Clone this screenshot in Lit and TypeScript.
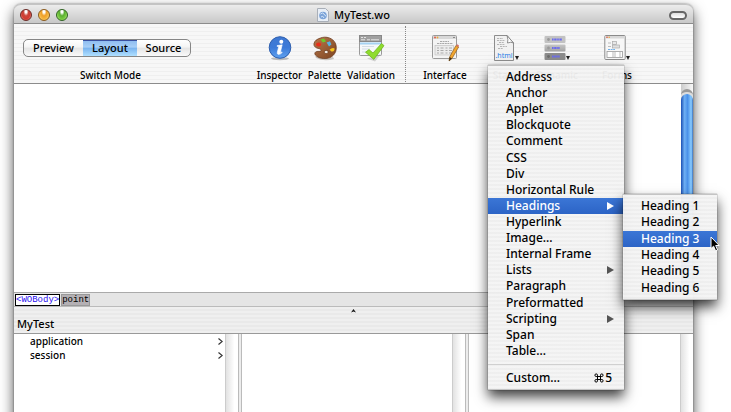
import { LitElement, html, css, svg, nothing } from "lit";
import { customElement, property, state } from "lit/decorators.js";
import { classMap } from "lit/directives/class-map.js";

const inspectorIcon = svg`<svg viewBox="0 0 24 26" width="24" height="26">
  <defs><linearGradient id="ins" x1="0" y1="0" x2="0" y2="1"><stop offset="0" stop-color="#3f78d2"/><stop offset=".5" stop-color="#3c7ad8"/><stop offset="1" stop-color="#5fa2f0"/></linearGradient></defs>
  <ellipse cx="12" cy="23.6" rx="9" ry="1.6" fill="#bbb"/>
  <circle cx="12" cy="12.5" r="10.8" fill="url(#ins)" stroke="#2f5fae" stroke-width="1"/>
  <circle cx="13.3" cy="6.8" r="2" fill="#fff"/>
  <path d="M9.2 10.6 L14.2 9.8 L12.4 17.2 Q12.3 18 13.9 16.9 L14.2 17.6 Q12.3 19.6 10.3 19.4 Q8.8 19 9.3 17.2 L10.6 12 Q10.6 11.2 9.1 11.4Z" fill="#fff" stroke="#fff" stroke-width=".6"/>
</svg>`;

const paletteIcon = svg`<svg viewBox="0 0 26 26" width="26" height="26">
  <defs><linearGradient id="pal" x1="0" y1="0" x2="1" y2="1"><stop offset="0" stop-color="#b87a4c"/><stop offset="1" stop-color="#7c4220"/></linearGradient></defs>
  <path d="M3 21 Q12 26 21 22 L22 24 Q12 27 4 23Z" fill="#c8c4c0"/>
  <path d="M8.5 3 C14 .8 21 3 23.5 8.5 C25.5 14 23.5 20 18 22.6 C13 24.6 6 23.4 3.4 20 C1.8 17.4 4 16.2 7 16.4 C9.6 16.4 10 14.8 7.6 13.8 C4 13 1.6 11.8 2 8.6 C2.6 5.6 5 4.2 8.5 3Z" fill="url(#pal)" stroke="#6b3a1d" stroke-width=".8"/>
  <ellipse cx="14.2" cy="17" rx="2" ry="1.6" fill="#f4efe9" stroke="#5d2d12" stroke-width=".6"/>
  <ellipse cx="6.6" cy="9.6" rx="2.6" ry="2" fill="#e8301c"/>
  <path d="M8.6 4.6 L12 3.6 L14 6.4 L10.8 7.4Z" fill="#6cc92c"/>
  <path d="M14.6 7.6 L18 6.2 L19.4 9.6 L17 11.6Z" fill="#55b4e4"/>
  <path d="M17.6 14.8 Q20 12.4 22.6 13.4 Q22.6 16.6 19.4 16.6Z" fill="#f7c81e"/>
</svg>`;

const validationIcon = svg`<svg viewBox="0 0 28 28" width="28" height="28">
  <rect x="2.5" y="1.500" width="22" height="20" rx="1" fill="#f6f8fa" stroke="#9a9a9a"/>
  <rect x="2.500" y="1.500" width="22" height="6" fill="#a0a0a0" stroke="#888"/>
  <path d="M4 3.500h2M7 3.500h2M4 5.800h4M10 5.800h3M14 5.800h8" stroke="#e4e4e4" stroke-width="1"/>
  <path d="M3 9.500h21" stroke="#a5d2f2" stroke-width="2"/>
  <path d="M5 12.500h12M5 15h8M5 18h5" stroke="#d3dde6" stroke-width="1"/>
  <path d="M10 24.500 L18 27.500 L24 20Z" fill="#999" opacity=".4"/>
  <path d="M8.500 18.200 L12 15.600 L16 19 L24.500 9.500 L27 11.600 L16.800 25.400Z" fill="#8fdc2e" stroke="#6fb51f" stroke-width=".8"/>
</svg>`;

const interfaceIcon = svg`<svg viewBox="0 0 28 28" width="28" height="28">
  <rect x="1.500" y="1.500" width="24" height="23" rx="1" fill="#f4f4f4" stroke="#9a9a9a"/>
  <rect x="2" y="2" width="23" height="3" fill="#d8d8d8"/>
  <circle cx="4" cy="3.500" r=".9" fill="#e0533c"/><circle cx="6.500" cy="3.500" r=".9" fill="#e8a83c"/><path d="M22 3.500h2" stroke="#888"/>
  <path d="M9 7.500h9M6 9.500h16" stroke="#a9a9a9" stroke-dasharray="2 .6"/>
  <rect x="4" y="11.500" width="18.500" height="9.500" fill="#ececec" stroke="#bbb" stroke-width=".6"/>
  <path d="M6 14h15M6 16.500h15M6 19h15" stroke="#aaa" stroke-dasharray="2 1.500 3 2"/>
  <path d="M18.600 23 L25 11.400 L27.600 13 L21 24.500 L18 27Z" fill="#f3a62e" stroke="#8a5c1c" stroke-width=".7"/>
  <path d="M25 11.400 L27.600 13 L28 11.400 L26.400 10.200Z" fill="#d9726a"/>
  <path d="M18.600 23 L21 24.500 L18 27Z" fill="#3d2c18"/>
</svg>`;

const staticIcon = svg`<svg viewBox="0 0 22 28" width="22" height="28">
  <path d="M1.500 1.500 H14 L20.500 9 V26.500 H1.500Z" fill="#f1f1f1" stroke="#8d8d8d"/>
  <path d="M14 1.500 Q15.500 6 14.500 9 Q18 7.500 20.500 9Z" fill="#fff" stroke="#777" stroke-width=".8"/>
  <path d="M4 4.500h6M4 6.500h8M6 8.500h5M4 10.500h8M7 12.500h7M5 14.500h5" stroke="#b5b5b5" stroke-dasharray="2 .7"/>
  <text x="11" y="24" text-anchor="middle" font-family="Noto Sans, sans-serif" font-size="7" fill="#2a80e8">.html</text>
</svg>`;

const dynamicIcon = svg`<svg viewBox="0 0 22 28" width="22" height="28">
  <defs><linearGradient id="bar" x1="0" y1="0" x2="0" y2="1"><stop offset="0" stop-color="#c6c6c6"/><stop offset="1" stop-color="#a2a2a2"/></linearGradient></defs>
  <rect x=".5" y="2" width="21" height="7" rx="1" fill="#c2c2c2"/>
  <rect x=".5" y="10.500" width="21" height="7" rx="1" fill="url(#bar)"/>
  <rect x=".5" y="19" width="21" height="7" rx="1" fill="#8c8c8c"/>
  <g fill="#999"><circle cx="4.500" cy="5.500" r="1.400"/><circle cx="4.500" cy="14" r="1.400"/><circle cx="4.500" cy="22.500" r="1.400" fill="#6c6c6c"/></g>
  <path d="M8 5.500h10M8 14h8M8 22.500h8" stroke="#6a6af0" stroke-width="2" stroke-dasharray="1.600 .6 2.400 .6"/>
</svg>`;

const formsIcon = svg`<svg viewBox="0 0 22 28" width="22" height="28">
  <rect x=".8" y="1.500" width="20.400" height="24" rx="1" fill="#f7f7f7" stroke="#8a8a8a"/>
  <rect x="1.300" y="2" width="19.400" height="2.500" fill="#d8d8d8"/>
  <circle cx="3" cy="3.300" r=".8" fill="#e0533c"/><circle cx="5.200" cy="3.300" r=".8" fill="#e8a83c"/>
  <rect x="8.500" y="7.500" width="4" height="3" fill="#e8e8e8" stroke="#aaa" stroke-width=".7"/>
  <path d="M4 9h3M4 12.500h3" stroke="#bbb"/>
  <rect x="8.500" y="11" width="7" height="3" fill="#e0e0e0" stroke="#aaa" stroke-width=".7"/>
  <path d="M4 15.500h7" stroke="#6fb0ec" stroke-dasharray="2 .6"/>
  <rect x="3" y="17.500" width="15.500" height="6" fill="#fff" stroke="#999" stroke-width=".8"/>
  <path d="M9 17.500v6M11 17.500v6M16 17.500v6" stroke="#aaa" stroke-width=".8"/>
</svg>`;

interface Tool {
  label: string;
  icon: unknown;
  menu?: boolean;
}

const tools: Tool[] = [
  { label: "Inspector", icon: inspectorIcon },
  { label: "Palette", icon: paletteIcon },
  { label: "Validation", icon: validationIcon },
];

const insertTools: Tool[] = [
  { label: "Interface", icon: interfaceIcon },
  { label: "Static", icon: staticIcon, menu: true },
  { label: "Dynamic", icon: dynamicIcon, menu: true },
  { label: "Forms", icon: formsIcon, menu: true },
];

interface MenuItem {
  label: string;
  sub?: boolean;
}

const staticItems: MenuItem[] = [
  { label: "Address" },
  { label: "Anchor" },
  { label: "Applet" },
  { label: "Blockquote" },
  { label: "Comment" },
  { label: "CSS" },
  { label: "Div" },
  { label: "Horizontal Rule" },
  { label: "Headings", sub: true },
  { label: "Hyperlink" },
  { label: "Image..." },
  { label: "Internal Frame" },
  { label: "Lists", sub: true },
  { label: "Paragraph" },
  { label: "Preformatted" },
  { label: "Scripting", sub: true },
  { label: "Span" },
  { label: "Table..." },
];

const headingItems: MenuItem[] = [1, 2, 3, 4, 5, 6].map((n) => ({ label: `Heading ${n}` }));

@customElement("menu-row")
class MenuRow extends LitElement {
  @property() label = "";
  @property() shortcut = "";
  @property({ type: Boolean }) sub = false;
  @property({ type: Boolean }) selected = false;

  static styles = css`
    :host {
      display: grid;
      min-height: 16px;
    }
    .row {
      display: flex;
      align-items: center;
      width: 100%;
      border: 0;
      padding: 0 10px 0 18px;
      background: none;
      color: #000;
      font: 500 12px/16px "Noto Sans", sans-serif;
      text-align: left;
      white-space: nowrap;
    }
    .selected {
      background: linear-gradient(#3b76d6, #2c64c6);
      color: #fff;
    }
    .label {
      flex: 1;
    }
    .arrow {
      fill: #555;
    }
    .selected .arrow {
      fill: #fff;
    }
    .shortcut {
      display: flex;
      align-items: center;
      gap: 1px;
      margin-right: 2px;
    }
  `;

  render() {
    return html`<button role="menuitem" class=${classMap({ row: true, selected: this.selected })}>
      <span class="label">${this.label}</span>
      ${this.shortcut
        ? html`<span class="shortcut">
            <svg width="10" height="10" viewBox="0 0 10 10" role="img" aria-label="Command">
              <path d="M3.500 3.500V2.200A1.300 1.300 0 1 0 2.200 3.500H7.800A1.300 1.300 0 1 0 6.500 2.200V7.800A1.300 1.300 0 1 0 7.800 6.500H2.200A1.300 1.300 0 1 0 3.500 7.800Z" fill="none" stroke="#000" stroke-width="1"/>
            </svg>${this.shortcut}</span>`
        : nothing}
      ${this.sub
        ? html`<svg class="arrow" width="7" height="8" viewBox="0 0 7 8"><path d="M0 0L7 4L0 8Z" /></svg>`
        : nothing}
    </button>`;
  }
}

@customElement("app-root")
class AppRoot extends LitElement {
  @state() private mode = "Layout";

  static styles = css`
    :host {
      display: block;
      box-sizing: border-box;
      height: 100vh;
      overflow: hidden;
      position: relative;
      padding: 4px 38px 0 14px;
      background: #fff;
      color: #000;
      font: 500 11px/14px "Noto Sans", sans-serif;
    }
    .window {
      display: flex;
      flex-direction: column;
      box-sizing: border-box;
      height: 110vh;
      border-radius: 7px 7px 0 0;
      box-shadow: 0 6px 14px rgba(0, 0, 0, 0.7), 0 0 2px rgba(0, 0, 0, 0.5);
      background: #ececec;
    }
    .titlebar {
      display: grid;
      grid-template-columns: 1fr auto 1fr;
      align-items: center;
      flex: none;
      box-sizing: border-box;
      height: 20px;
      padding: 2px 6px 0 6px;
      border-top: 1px solid #c4c4c4;
      border-bottom: 1px solid #8c8c8c;
      border-radius: 7px 7px 0 0;
      background: linear-gradient(#ececec, #c8c8c8);
    }
    .lights {
      display: flex;
      gap: 6px;
    }
    .light {
      width: 12px;
      height: 12px;
      padding: 0;
      border: 1px solid #555;
      border-radius: 50%;
    }
    .close {
      border-color: #6b2a26;
      background: radial-gradient(ellipse at 50% 15%, #fff 0 12%, #c9483c 36%, #d23a30 60%, #f6a59a);
    }
    .minimise {
      border-color: #8a5a1c;
      background: radial-gradient(ellipse at 50% 15%, #fff 0 12%, #ef9f28 36%, #f6b23c 60%, #ffee90);
    }
    .zoom {
      border-color: #2e6220;
      background: radial-gradient(ellipse at 50% 15%, #fff 0 12%, #5cae34 36%, #74c83e 60%, #d2f59a);
    }
    .title {
      display: flex;
      align-items: center;
      gap: 5px;
      margin: 0;
      font: 500 11px/16px "Noto Sans", sans-serif;
    }
    .pill {
      justify-self: end;
      width: 18px;
      height: 9px;
      padding: 0;
      border: 2px solid #666;
      border-radius: 5px;
      background: linear-gradient(#ddd, #fff);
    }
    .toolbar {
      display: grid;
      grid-template-columns: 168px 60px 57px 33px 60px 8px 72px 50px 52px 68px;
      flex: none;
      box-sizing: border-box;
      height: 60px;
      padding-left: 9px;
      border-bottom: 1px solid #8c8c8c;
      background: repeating-linear-gradient(#f7f7f7 0 3px, #efefef 3px 4px);
    }
    .switch {
      grid-column: 1 / 3;
      width: 175px;
    }
    .segments {
      display: grid;
      grid-template-columns: 59px 54px 1fr;
      box-sizing: border-box;
      width: 168px;
      height: 18px;
      margin-top: 15px;
      border: 1px solid #868686;
      border-radius: 5px;
      overflow: hidden;
      background: linear-gradient(#fff, #f4f4f4 45%, #e4e4e4 50%, #fafafa);
    }
    .segment {
      padding: 0;
      border: 0;
      background: none;
      color: #000;
      font: 500 11px/16px "Noto Sans", sans-serif;
    }
    .chosen {
      background: linear-gradient(#3a50a0 0 1px, #8fbdf0 1px, #a9d0f8 45%, #79b3ef 50%, #b0e0ff);
    }
    .caption {
      display: block;
      text-align: center;
      white-space: nowrap;
      font: 500 10px/14px "Noto Sans", sans-serif;
    }
    .switch .caption {
      margin-top: 11px;
    }
    .tool {
      display: flex;
      flex-direction: column;
      align-items: center;
      padding: 8px 0 0;
      border: 0;
      background: none;
      color: #000;
    }
    .picture {
      display: flex;
      align-items: center;
      height: 32px;
      margin-bottom: 4px;
    }
    .drop {
      align-self: flex-end;
      margin-bottom: 4px;
    }
    .divider {
      justify-self: center;
      height: 56px;
      margin-top: 2px;
      border-left: 1px dotted #888;
    }
    .editor {
      display: flex;
      justify-content: flex-end;
      flex: none;
      height: 208px;
      background: #fff;
    }
    .scroller {
      display: flex;
      flex-direction: column;
      width: 12px;
      background: linear-gradient(90deg, #ccc, #f8f8f8);
    }
    .cap {
      box-sizing: border-box;
      height: 8px;
      margin-top: 5px;
      border-top: 3px solid #999;
      border-radius: 6px 6px 0 0;
      background: #ddd;
    }
    .thumb {
      flex: 1;
      margin-top: -3px;
      border-radius: 6px 6px 0 0;
      background: linear-gradient(90deg, #1c50b4, #6fb0f4 30%, #4a90e8 55%, #8accff 85%, #3870c0);
    }
    .path {
      display: flex;
      align-items: center;
      gap: 1px;
      flex: none;
      box-sizing: border-box;
      height: 15px;
      padding-left: 1px;
      border-top: 1px solid #aaa;
      border-bottom: 1px solid #bbb;
      background: #e5e5e5;
    }
    .crumb {
      box-sizing: border-box;
      height: 12px;
      padding: 0;
      border: 1px solid #999;
      background: #b4b0b4;
      color: #000;
      font: 9px/10px "Liberation Mono", monospace;
    }
    .current {
      border-color: #000;
      background: #fff;
      color: #2a10f0;
    }
    .header {
      display: grid;
      grid-template-columns: 1fr auto 1fr;
      flex: none;
      box-sizing: border-box;
      height: 26px;
      padding: 0 3px;
      background: repeating-linear-gradient(#efefef 0 2px, #e9e9e9 2px 4px);
    }
    .name {
      align-self: end;
      margin: 0;
      font: 500 11px/18px "Noto Sans", sans-serif;
    }
    .grip {
      margin-top: 2px;
    }
    .columns {
      display: grid;
      grid-template-columns: repeat(3, 1fr);
      gap: 2px;
      flex: 1;
      border-top: 1px solid #999;
    }
    .column {
      display: flex;
      border-right: 1px solid #bbb;
      background: #fff;
    }
    .column + .column {
      border-left: 1px solid #bbb;
    }
    .column:last-child {
      border-right: 0;
    }
    .entries {
      flex: 1;
      margin: 0;
      padding: 0 2px 0 16px;
      list-style: none;
    }
    .entry {
      display: flex;
      justify-content: space-between;
      align-items: center;
      width: 100%;
      padding: 0;
      border: 0;
      background: none;
      color: #000;
      font: 500 10px/14px "Noto Sans", sans-serif;
    }
    .track {
      width: 12px;
      border-left: 1px solid #ccc;
      background: linear-gradient(90deg, #e2e2e2, #fff 70%);
    }
    .menu {
      position: absolute;
      top: 65px;
      left: 488px;
      box-sizing: border-box;
      width: 136px;
      padding: 3px 0;
      border: 1px solid #c4c4c4;
      border-width: 1px 0;
      background: repeating-linear-gradient(rgba(244, 244, 244, 0.96) 0 2px, rgba(238, 238, 238, 0.96) 2px 4px);
      box-shadow: 0 7px 12px rgba(0, 0, 0, 0.75), 0 0 1px rgba(0, 0, 0, 0.6);
    }
    .items {
      display: grid;
      grid-auto-rows: 1fr;
      height: 290px;
    }
    .rule {
      height: 1px;
      margin: 5px 0;
      border: 0;
      background: #d0d0d0;
    }
    .submenu {
      top: 194px;
      left: 623px;
      width: 94px;
    }
    .submenu .items {
      height: 98px;
    }
    .pointer {
      position: absolute;
      top: 236px;
      left: 710px;
    }
  `;

  private tool(item: Tool) {
    return html`<button class="tool">
      <span class="picture">
        ${item.icon}
        ${item.menu
          ? html`<svg class="drop" width="4" height="5" viewBox="0 0 4 5"><path d="M0 1H4L2 5Z" fill="#222" /></svg>`
          : nothing}
      </span>
      <span class="caption">${item.label}</span>
    </button>`;
  }

  render() {
    return html`
      <main class="window">
        <header class="titlebar">
          <div class="lights">
            <button class="light close" aria-label="Close"></button>
            <button class="light minimise" aria-label="Minimise"></button>
            <button class="light zoom" aria-label="Zoom"></button>
          </div>
          <h1 class="title">
            <svg width="12" height="14" viewBox="0 0 12 14">
              <path d="M.5 .5H8.500L11.500 3.500V13.500H.5Z" fill="#e8eef6" stroke="#a9afb8" />
              <circle cx="6" cy="7.500" r="3.800" fill="#7ba3d8" />
              <path d="M3.500 6Q6 4 7 6T9 8M4 9Q6 7 7 10" fill="none" stroke="#d5e5f7" />
            </svg>
            MyTest.wo
          </h1>
          <button class="pill" aria-label="Toggle toolbar"></button>
        </header>

        <nav class="toolbar" aria-label="Toolbar">
          <div class="switch">
            <div class="segments">
              ${["Preview", "Layout", "Source"].map(
                (m) => html`<button
                  class=${classMap({ segment: true, chosen: m === this.mode })}
                  aria-pressed=${m === this.mode}
                  @click=${() => (this.mode = m)}
                >${m}</button>`
              )}
            </div>
            <span class="caption">Switch Mode</span>
          </div>
          ${tools.map((t) => this.tool(t))}
          <span class="divider"></span>
          ${insertTools.map((t) => this.tool(t))}
        </nav>

        <section class="editor" aria-label="Page">
          <div class="scroller"><div class="cap"></div><div class="thumb"></div></div>
        </section>

        <div class="path">
          <button class="crumb current">&lt;WOBody&gt;</button>
          <button class="crumb">point</button>
        </div>

        <div class="header">
          <h2 class="name">MyTest</h2>
          <svg class="grip" width="5" height="4" viewBox="0 0 5 4"><path d="M0 3.500L2.500 0L5 3.500L2.500 2.500Z" fill="#111" /></svg>
        </div>

        <section class="columns" aria-label="Keys">
          <div class="column">
            <ul class="entries">
              ${["application", "session"].map(
                (k) => html`<li>
                  <button class="entry">
                    ${k}
                    <svg width="5" height="7" viewBox="0 0 5 7"><path d="M.5 .5L4.200 3.500L.5 6.500" fill="none" stroke="#333" stroke-width="1.200" /></svg>
                  </button>
                </li>`
              )}
            </ul>
            <div class="track"></div>
          </div>
          <div class="column"><ul class="entries"></ul><div class="track"></div></div>
          <div class="column"><ul class="entries"></ul><div class="track"></div></div>
        </section>
      </main>

      <div class="menu" role="menu" aria-label="Static">
        <div class="items">
          ${staticItems.map(
            (i) => html`<menu-row .label=${i.label} .sub=${!!i.sub} .selected=${i.label === "Headings"}></menu-row>`
          )}
        </div>
        <hr class="rule" />
        <menu-row label="Custom..." shortcut="5"></menu-row>
      </div>

      <div class="menu submenu" role="menu" aria-label="Headings">
        <div class="items">
          ${headingItems.map(
            (i) => html`<menu-row .label=${i.label} .selected=${i.label === "Heading 3"}></menu-row>`
          )}
        </div>
      </div>

      <svg class="pointer" width="10" height="16" viewBox="0 0 10 16">
        <path d="M1 1V12.500L3.600 10.200L5.600 14.800L7.600 14L5.700 9.500H9.200Z" fill="#000" stroke="#fff" stroke-width="1" />
      </svg>
    `;
  }
}
